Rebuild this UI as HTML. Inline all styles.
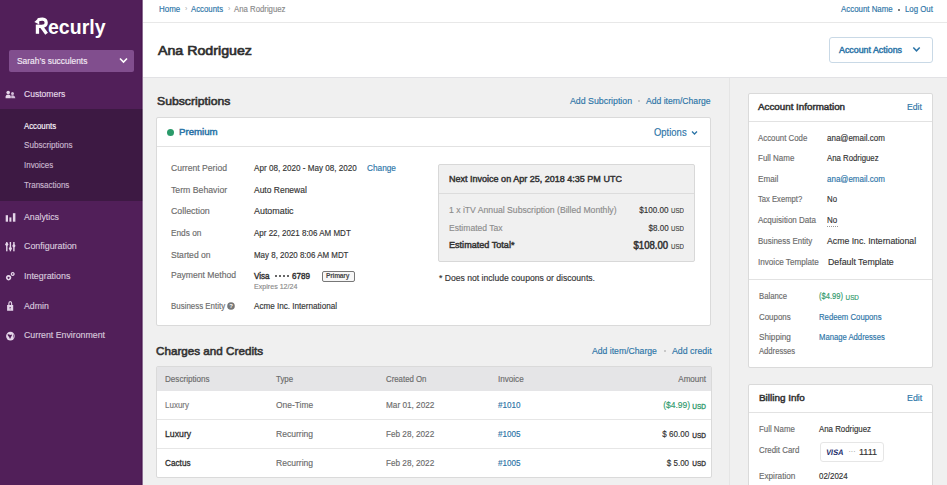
<!DOCTYPE html>
<html><head><meta charset="utf-8">
<style>
*{margin:0;padding:0;box-sizing:border-box}
html,body{width:947px;height:485px;overflow:hidden;background:#f0f0f0;font-family:"Liberation Sans",sans-serif;color:#333}
.a{position:absolute}
.t{position:absolute;white-space:nowrap;line-height:20px;height:20px}
.card{position:absolute;background:#fff;border:1px solid #dadada;border-radius:2px}
</style></head><body>
<!-- sidebar -->
<div class="a" style="left:0;top:0;width:143px;height:485px;background:#511f59"></div>
<div class="a" style="left:0;top:109px;width:143px;height:92px;background:#3d1943"></div>
<div class="a" style="left:141px;top:0;width:1px;height:485px;background:#4a1851"></div><div class="a" style="left:142px;top:0;width:1px;height:485px;background:#8b6c91"></div><div class="a" style="left:141px;top:109px;width:1px;height:92px;background:#34113b"></div><div class="a" style="left:142px;top:109px;width:1px;height:92px;background:#7a6480"></div>
<svg class="a" style="left:0;top:0" width="120" height="45" viewBox="0 0 120 45">
 <g fill="#fff">
  <rect x="35.8" y="24.6" width="3.3" height="9.2"/>
  <path d="M34.4 22.1 L39 17.7 L39.3 24.5Z"/>
 </g>
 <path d="M37.9 19.9 Q40.5 19 42.6 19.1 Q46.2 19.4 46.2 22.8 Q46.2 26.3 41.8 26.4 L37.5 26.4" stroke="#fff" stroke-width="3.2" fill="none"/>
 <path d="M40.8 25.8 L46.6 33.8" stroke="#fff" stroke-width="3.3" fill="none"/>
 <text x="48" y="33.7" font-family="Liberation Sans" font-weight="bold" font-size="21" fill="#fff" textLength="57.5" lengthAdjust="spacingAndGlyphs">ecurly</text>
</svg>
<div class="a" style="left:9px;top:50px;width:125px;height:22px;background:#814e8e;border-radius:2px"></div>
<svg class="a" style="left:119px;top:57px" width="9" height="7" viewBox="0 0 9 7"><path d="M1 1.5 L4.5 5 L8 1.5" stroke="#fff" stroke-width="1.6" fill="none"/></svg>
<svg class="a" style="left:0;top:80px" width="20" height="270" viewBox="0 80 20 270">
<g fill="#e4d5e9">
 <circle cx="8.2" cy="92.5" r="1.8"/><path d="M5.6 98.2 L5.6 96.6 Q5.8 94.6 8.2 94.6 Q10.6 94.6 10.8 96.6 L10.8 98.2Z"/>
 <circle cx="12.5" cy="93.4" r="1.5" fill="#d2bdd8"/><path d="M11.2 98.2 L11.2 95.6 Q12.5 95.2 13.6 95.4 Q15.2 96 15.3 98.2Z" fill="#d2bdd8"/>
 <rect x="5.7" y="215.2" width="2.3" height="6.5"/><rect x="9.4" y="217.4" width="2" height="4.3"/><rect x="12.9" y="213.2" width="2.5" height="8.5"/>
 <rect x="6.1" y="242" width="1.4" height="9.3"/><rect x="9.7" y="242" width="1.4" height="9.3"/><rect x="13.2" y="242" width="1.4" height="9.3"/>
 <circle cx="6.8" cy="244.3" r="1.5"/><circle cx="10.4" cy="248.4" r="1.5"/><circle cx="13.9" cy="245.8" r="1.5"/>
 <path fill-rule="evenodd" d="M8.6 275 a2.7 2.7 0 1 0 0.01 0Z M8.6 276.7 a1 1 0 1 1 -0.01 0Z"/>
 <path fill-rule="evenodd" d="M12.7 271.9 a2 2 0 1 0 0.01 0Z M12.7 273.2 a0.7 0.7 0 1 1 -0.01 0Z"/>
 <path d="M8.3 305.2 L8.3 303.6 Q8.3 301 10.2 301 Q12.2 301 12.2 303.6 L12.2 305.2 L11.1 305.2 L11.1 303.6 Q11.1 302.2 10.2 302.2 Q9.4 302.2 9.4 303.6 L9.4 305.2Z"/>
 <path fill-rule="evenodd" d="M7.1 305.1 H13.2 V310.8 H7.1Z M10.2 307.2 a0.8 0.8 0 1 0 0.01 0Z M9.8 308 h0.8 v1.3 h-0.8Z"/>
 <circle cx="10.4" cy="336.1" r="4.3"/>
 <path d="M7.5 334.5 Q9 334 10.1 334.9 L11.8 334.5 Q12.3 335.9 11.1 336.7 Q10.7 338.1 10 338.9 Q9.3 337.7 9 336.7 Q7.9 336.4 7.5 334.5Z M13.1 333.4 Q14.7 335.6 13.7 338.4 Q13.5 336 13.1 333.4Z" fill="#511f59"/>
</g></svg>

<!-- header -->
<div class="a" style="left:143px;top:0;width:804px;height:78px;background:#fff;border-bottom:1px solid #e2e2e5"></div>
<div class="a" style="left:143px;top:22px;width:804px;height:1px;background:#e8e8e8"></div>
<div class="t" style="left:185px;top:-1px;font-size:7px;color:#aaa">›</div>
<div class="t" style="left:228px;top:-1px;font-size:7px;color:#aaa">›</div>
<div class="a" style="left:898px;top:8.5px;width:2px;height:2px;border-radius:1px;background:#555"></div>
<div class="a" style="left:829px;top:37px;width:104px;height:26px;border:1px solid #c9d9e6;border-radius:3px;background:#fff"></div>
<svg class="a" style="left:912px;top:46px" width="9" height="7" viewBox="0 0 9 7"><path d="M1.3 1.5 L4.5 4.8 L7.7 1.5" stroke="#2b74a7" stroke-width="1.5" fill="none"/></svg>

<!-- vertical divider -->
<div class="a" style="left:729px;top:78px;width:1px;height:407px;background:#e5e5e5"></div>

<!-- subscriptions -->
<div class="a" style="left:638px;top:100px;width:2px;height:2px;border-radius:1px;background:#bbb"></div>
<div class="card" style="left:156px;top:117px;width:555px;height:209px"></div>
<div class="a" style="left:157px;top:146px;width:553px;height:1px;background:#e2e2e2"></div>
<div class="a" style="left:167px;top:128.5px;width:7px;height:7px;border-radius:50%;background:#2a9a6a"></div>
<svg class="a" style="left:691px;top:129.5px" width="7" height="6" viewBox="0 0 7 6"><path d="M1 1.5 L3.5 4 L6 1.5" stroke="#2b74a7" stroke-width="1.3" fill="none"/></svg>
<div class="a" style="left:321.5px;top:270.5px;width:33px;height:11px;border:1px solid #777;border-radius:2px;background:#f7f7f7"></div>
<div class="t" style="left:326px;top:266px;font-size:6.7px;font-weight:bold;color:#444;letter-spacing:-0.25px">Primary</div>
<svg class="a" style="left:227px;top:302px" width="8" height="8" viewBox="0 0 8 8"><circle cx="4" cy="4" r="3.8" fill="#777"/><text x="4" y="6.3" font-family="Liberation Sans" font-weight="bold" font-size="6" fill="#fff" text-anchor="middle">?</text></svg>
<div class="a" style="left:438px;top:164px;width:257px;height:98px;background:#f0f0f0;border:1px solid #d8d8d8;border-radius:2px"></div>
<div class="a" style="left:439px;top:193px;width:255px;height:1px;background:#dcdcdc"></div>

<!-- charges -->
<div class="a" style="left:664px;top:350px;width:2px;height:2px;border-radius:1px;background:#bbb"></div>
<div class="card" style="left:156px;top:366px;width:556px;height:112px;overflow:hidden"></div>
<div class="a" style="left:157px;top:367px;width:554px;height:24px;background:#e5e5e7"></div>
<div class="a" style="left:157px;top:419px;width:554px;height:1px;background:#e6e6e6"></div>
<div class="a" style="left:157px;top:448px;width:554px;height:1px;background:#e6e6e6"></div>

<!-- right column -->
<div class="card" style="left:748px;top:93px;width:185px;height:275px"></div>
<div class="a" style="left:749px;top:121px;width:183px;height:1px;background:#e2e2e2"></div>
<div class="a" style="left:749px;top:279px;width:183px;height:1px;background:#e2e2e2"></div>
<div class="a" style="left:827px;top:225.5px;width:10.5px;height:0;border-top:1px dotted #999"></div>
<div class="card" style="left:748px;top:384px;width:185px;height:120px"></div>
<div class="a" style="left:749px;top:412px;width:183px;height:1px;background:#e2e2e2"></div>
<div class="a" style="left:819.5px;top:442px;width:64px;height:19.5px;border:1px solid #e6e6e6;border-radius:3px;background:#fff"></div>
<svg class="a" style="left:822px;top:445px" width="24" height="12" viewBox="0 0 24 12"><text x="3.6" y="10" font-family="Liberation Sans" font-weight="bold" font-size="7.9" fill="#1c2d6b" textLength="17.4" lengthAdjust="spacingAndGlyphs" transform="skewX(-10) translate(1.8,0)">VISA</text></svg>
<div class="t" style="left:848.5px;top:441.5px;font-size:7px;color:#888">···</div>


<div class="a" style="left:274.5px;top:274.5px;width:2px;height:2px;border-radius:1px;background:#333"></div><div class="a" style="left:278.5px;top:274.5px;width:2px;height:2px;border-radius:1px;background:#333"></div><div class="a" style="left:282.5px;top:274.5px;width:2px;height:2px;border-radius:1px;background:#333"></div><div class="a" style="left:286.5px;top:274.5px;width:2px;height:2px;border-radius:1px;background:#333"></div>
<div class="t" style="top:51px;font-size:9.09px;color:#f3e9f5;transform:scaleX(0.9259);transform-origin:left center;-webkit-text-stroke:0.15px #f3e9f5;left:16.60px;">Sarah’s succulents</div>
<div class="t" style="top:84px;font-size:9.23px;color:#e6dcea;transform:scaleX(0.9259);transform-origin:left center;-webkit-text-stroke:0.15px #e6dcea;left:23.80px;">Customers</div>
<div class="t" style="top:116px;font-size:8.45px;color:#fbf6fc;transform:scaleX(0.9259);transform-origin:left center;-webkit-text-stroke:0.15px #fbf6fc;left:23.90px;">Accounts</div>
<div class="t" style="top:135px;font-size:8.76px;color:#cab7cf;transform:scaleX(0.9259);transform-origin:left center;-webkit-text-stroke:0.15px #cab7cf;left:23.90px;">Subscriptions</div>
<div class="t" style="top:155px;font-size:8.60px;color:#cab7cf;transform:scaleX(0.9259);transform-origin:left center;-webkit-text-stroke:0.15px #cab7cf;left:23.90px;">Invoices</div>
<div class="t" style="top:175px;font-size:8.62px;color:#cab7cf;transform:scaleX(0.9259);transform-origin:left center;-webkit-text-stroke:0.15px #cab7cf;left:23.90px;">Transactions</div>
<div class="t" style="top:207px;font-size:9.42px;color:#d8cadd;transform:scaleX(0.9259);transform-origin:left center;-webkit-text-stroke:0.15px #d8cadd;left:23.70px;">Analytics</div>
<div class="t" style="top:236px;font-size:9.59px;color:#d8cadd;transform:scaleX(0.9259);transform-origin:left center;-webkit-text-stroke:0.15px #d8cadd;left:23.70px;">Configuration</div>
<div class="t" style="top:266px;font-size:9.59px;color:#d8cadd;transform:scaleX(0.9259);transform-origin:left center;-webkit-text-stroke:0.15px #d8cadd;left:23.70px;">Integrations</div>
<div class="t" style="top:296px;font-size:9.45px;color:#d8cadd;transform:scaleX(0.9259);transform-origin:left center;-webkit-text-stroke:0.15px #d8cadd;left:23.70px;">Admin</div>
<div class="t" style="top:325px;font-size:9.49px;color:#d8cadd;transform:scaleX(0.9259);transform-origin:left center;-webkit-text-stroke:0.15px #d8cadd;left:23.70px;">Current Environment</div>
<div class="t" style="top:-1px;font-size:8.58px;color:#2b74a7;transform:scaleX(0.9259);transform-origin:left center;-webkit-text-stroke:0.15px #2b74a7;left:158.80px;">Home</div>
<div class="t" style="top:-1px;font-size:8.43px;color:#2b74a7;transform:scaleX(0.9259);transform-origin:left center;-webkit-text-stroke:0.15px #2b74a7;left:191.20px;">Accounts</div>
<div class="t" style="top:-1px;font-size:8.42px;color:#8a8a8a;transform:scaleX(0.9259);transform-origin:left center;-webkit-text-stroke:0.15px #8a8a8a;left:234.40px;">Ana Rodriguez</div>
<div class="t" style="top:-1px;font-size:8.53px;color:#2b74a7;transform:scaleX(0.9259);transform-origin:left center;-webkit-text-stroke:0.15px #2b74a7;left:841.10px;">Account Name</div>
<div class="t" style="top:-1px;font-size:8.47px;color:#2b74a7;transform:scaleX(0.9259);transform-origin:left center;-webkit-text-stroke:0.15px #2b74a7;left:904.60px;">Log Out</div>
<div class="t" style="top:41px;font-size:13.65px;color:#2e2e2e;transform:scaleX(1.0411);transform-origin:left center;-webkit-text-stroke:0.68px #2e2e2e;left:158.40px;">Ana Rodriguez</div>
<div class="t" style="top:40px;font-size:8.50px;color:#2b74a7;transform:scaleX(1.0417);transform-origin:left center;-webkit-text-stroke:0.42px #2b74a7;left:839.00px;">Account Actions</div>
<div class="t" style="top:91px;font-size:11.76px;color:#333;transform:scaleX(1.0400);transform-origin:left center;-webkit-text-stroke:0.59px #333;left:157.00px;">Subscriptions</div>
<div class="t" style="top:91px;font-size:9.51px;color:#2b74a7;transform:scaleX(0.9259);transform-origin:left center;-webkit-text-stroke:0.15px #2b74a7;left:569.60px;">Add Subcription</div>
<div class="t" style="top:91px;font-size:9.31px;color:#2b74a7;transform:scaleX(0.9259);transform-origin:left center;-webkit-text-stroke:0.15px #2b74a7;left:646.20px;">Add item/Charge</div>
<div class="t" style="top:122px;font-size:9.38px;color:#2b74a7;transform:scaleX(1.0309);transform-origin:left center;-webkit-text-stroke:0.47px #2b74a7;left:179.30px;">Premium</div>
<div class="t" style="top:123px;font-size:10.22px;color:#2b74a7;transform:scaleX(0.9259);transform-origin:left center;-webkit-text-stroke:0.15px #2b74a7;left:654.10px;">Options</div>
<div class="t" style="top:158px;font-size:9.30px;color:#6b6b6b;transform:scaleX(0.9259);transform-origin:left center;-webkit-text-stroke:0.15px #6b6b6b;left:170.50px;">Current Period</div>
<div class="t" style="top:158px;font-size:8.77px;color:#333;transform:scaleX(0.9259);transform-origin:left center;-webkit-text-stroke:0.15px #333;left:253.70px;">Apr 08, 2020 - May 08, 2020</div>
<div class="t" style="top:180px;font-size:9.41px;color:#6b6b6b;transform:scaleX(0.9259);transform-origin:left center;-webkit-text-stroke:0.15px #6b6b6b;left:170.50px;">Term Behavior</div>
<div class="t" style="top:180px;font-size:9.16px;color:#333;transform:scaleX(0.9259);transform-origin:left center;-webkit-text-stroke:0.15px #333;left:253.70px;">Auto Renewal</div>
<div class="t" style="top:201px;font-size:9.54px;color:#6b6b6b;transform:scaleX(0.9259);transform-origin:left center;-webkit-text-stroke:0.15px #6b6b6b;left:170.50px;">Collection</div>
<div class="t" style="top:201px;font-size:9.62px;color:#333;transform:scaleX(0.9259);transform-origin:left center;-webkit-text-stroke:0.15px #333;left:253.70px;">Automatic</div>
<div class="t" style="top:223px;font-size:8.95px;color:#6b6b6b;transform:scaleX(0.9259);transform-origin:left center;-webkit-text-stroke:0.15px #6b6b6b;left:170.50px;">Ends on</div>
<div class="t" style="top:223px;font-size:8.65px;color:#333;transform:scaleX(0.9259);transform-origin:left center;-webkit-text-stroke:0.15px #333;left:253.70px;">Apr 22, 2021 8:06 AM MDT</div>
<div class="t" style="top:245px;font-size:9.27px;color:#6b6b6b;transform:scaleX(0.9259);transform-origin:left center;-webkit-text-stroke:0.15px #6b6b6b;left:170.50px;">Started on</div>
<div class="t" style="top:245px;font-size:8.58px;color:#333;transform:scaleX(0.9259);transform-origin:left center;-webkit-text-stroke:0.15px #333;left:253.70px;">May 8, 2020 8:06 AM MDT</div>
<div class="t" style="top:265px;font-size:9.31px;color:#6b6b6b;transform:scaleX(0.9259);transform-origin:left center;-webkit-text-stroke:0.15px #6b6b6b;left:170.50px;">Payment Method</div>
<div class="t" style="top:296px;font-size:8.55px;color:#6b6b6b;transform:scaleX(0.9259);transform-origin:left center;-webkit-text-stroke:0.15px #6b6b6b;left:170.50px;">Business Entity</div>
<div class="t" style="top:296px;font-size:8.78px;color:#333;transform:scaleX(0.9259);transform-origin:left center;-webkit-text-stroke:0.15px #333;left:253.70px;">Acme Inc. International</div>
<div class="t" style="top:158px;font-size:8.94px;color:#2b74a7;transform:scaleX(0.9259);transform-origin:left center;-webkit-text-stroke:0.15px #2b74a7;left:367.20px;">Change</div>
<div class="t" style="top:266px;font-size:8.52px;color:#333;transform:scaleX(0.9434);transform-origin:left center;-webkit-text-stroke:0.43px #333;left:253.70px;">Visa</div>
<div class="t" style="top:266px;font-size:8.58px;color:#333;transform:scaleX(0.9434);transform-origin:left center;-webkit-text-stroke:0.43px #333;left:292.00px;">6789</div>
<div class="t" style="top:277px;font-size:7.68px;color:#8a8a8a;transform:scaleX(0.9259);transform-origin:left center;-webkit-text-stroke:0.15px #8a8a8a;left:253.70px;">Expires 12/24</div>
<div class="t" style="top:169px;font-size:8.66px;color:#333;transform:scaleX(1.0417);transform-origin:left center;-webkit-text-stroke:0.43px #333;left:449.30px;">Next Invoice on Apr 25, 2018 4:35 PM UTC</div>
<div class="t" style="top:200px;font-size:9.33px;color:#8c8c8c;transform:scaleX(0.9259);transform-origin:left center;-webkit-text-stroke:0.15px #8c8c8c;left:449.30px;">1 x iTV Annual Subscription (Billed Monthly)</div>
<div class="t" style="top:218px;font-size:9.24px;color:#8c8c8c;transform:scaleX(0.9259);transform-origin:left center;-webkit-text-stroke:0.15px #8c8c8c;left:449.30px;">Estimated Tax</div>
<div class="t" style="top:235px;font-size:9.27px;color:#333;transform:scaleX(0.9804);transform-origin:left center;-webkit-text-stroke:0.46px #333;left:449.30px;">Estimated Total*</div>
<div class="t" style="top:200px;font-size:8.75px;color:#333;transform:scaleX(0.9259);transform-origin:right center;-webkit-text-stroke:0.15px #333;right:278.30px;">$100.00</div>
<div class="t" style="top:218px;font-size:8.63px;color:#333;transform:scaleX(0.9259);transform-origin:right center;-webkit-text-stroke:0.15px #333;right:278.30px;">$8.00</div>
<div class="t" style="top:236px;font-size:10.27px;color:#333;transform:scaleX(0.9320);transform-origin:right center;-webkit-text-stroke:0.51px #333;right:278.70px;">$108.00</div>
<div class="t" style="top:201px;font-size:7.08px;color:#444;transform:scaleX(0.8696);transform-origin:right center;-webkit-text-stroke:0.15px #444;right:263.10px;">USD</div>
<div class="t" style="top:219px;font-size:7.08px;color:#444;transform:scaleX(0.8696);transform-origin:right center;-webkit-text-stroke:0.15px #444;right:263.10px;">USD</div>
<div class="t" style="top:237px;font-size:7.08px;color:#444;transform:scaleX(0.8696);transform-origin:right center;-webkit-text-stroke:0.15px #444;right:263.10px;">USD</div>
<div class="t" style="top:268px;font-size:9.31px;color:#333;transform:scaleX(0.9259);transform-origin:left center;-webkit-text-stroke:0.15px #333;left:439.00px;">* Does not include coupons or discounts.</div>
<div class="t" style="top:341px;font-size:11.49px;color:#333;transform:scaleX(1.0166);transform-origin:left center;-webkit-text-stroke:0.57px #333;left:156.40px;">Charges and Credits</div>
<div class="t" style="top:341px;font-size:9.36px;color:#2b74a7;transform:scaleX(0.9259);transform-origin:left center;-webkit-text-stroke:0.15px #2b74a7;left:592.30px;">Add item/Charge</div>
<div class="t" style="top:341px;font-size:9.50px;color:#2b74a7;transform:scaleX(0.9259);transform-origin:left center;-webkit-text-stroke:0.15px #2b74a7;left:671.80px;">Add credit</div>
<div class="t" style="top:369px;font-size:8.75px;color:#6b6b6b;transform:scaleX(0.9259);transform-origin:left center;-webkit-text-stroke:0.15px #6b6b6b;left:164.60px;">Descriptions</div>
<div class="t" style="top:369px;font-size:8.52px;color:#6b6b6b;transform:scaleX(0.9259);transform-origin:left center;-webkit-text-stroke:0.15px #6b6b6b;left:275.70px;">Type</div>
<div class="t" style="top:369px;font-size:8.46px;color:#6b6b6b;transform:scaleX(0.9259);transform-origin:left center;-webkit-text-stroke:0.15px #6b6b6b;left:386.30px;">Created On</div>
<div class="t" style="top:369px;font-size:8.76px;color:#6b6b6b;transform:scaleX(0.9259);transform-origin:left center;-webkit-text-stroke:0.15px #6b6b6b;left:497.60px;">Invoice</div>
<div class="t" style="top:369px;font-size:8.74px;color:#6b6b6b;transform:scaleX(0.9259);transform-origin:right center;-webkit-text-stroke:0.15px #6b6b6b;right:241.10px;">Amount</div>
<div class="t" style="top:395px;font-size:8.64px;color:#777;transform:scaleX(0.9259);transform-origin:left center;-webkit-text-stroke:0.15px #777;left:164.60px;">Luxury</div>
<div class="t" style="top:395px;font-size:9.09px;color:#6b6b6b;transform:scaleX(0.9259);transform-origin:left center;-webkit-text-stroke:0.15px #6b6b6b;left:275.70px;">One-Time</div>
<div class="t" style="top:395px;font-size:8.87px;color:#6b6b6b;transform:scaleX(0.9259);transform-origin:left center;-webkit-text-stroke:0.15px #6b6b6b;left:386.30px;">Mar 01, 2022</div>
<div class="t" style="top:395px;font-size:8.78px;color:#2b74a7;transform:scaleX(0.9259);transform-origin:left center;-webkit-text-stroke:0.15px #2b74a7;left:497.60px;">#1010</div>
<div class="t" style="top:395px;font-size:9.17px;color:#2f9a6c;transform:scaleX(0.9259);transform-origin:right center;-webkit-text-stroke:0.15px #2f9a6c;right:256.60px;">($4.99)</div>
<div class="t" style="top:397px;font-size:6.44px;color:#2f9a6c;transform:scaleX(1.0000);transform-origin:right center;-webkit-text-stroke:0.32px #2f9a6c;right:241.10px;">USD</div>
<div class="t" style="top:424px;font-size:9.78px;color:#2e2e2e;transform:scaleX(0.8929);transform-origin:left center;-webkit-text-stroke:0.3px #2e2e2e;left:164.60px;">Luxury</div>
<div class="t" style="top:424px;font-size:9.24px;color:#6b6b6b;transform:scaleX(0.9259);transform-origin:left center;-webkit-text-stroke:0.15px #6b6b6b;left:275.70px;">Recurring</div>
<div class="t" style="top:424px;font-size:8.83px;color:#6b6b6b;transform:scaleX(0.9259);transform-origin:left center;-webkit-text-stroke:0.15px #6b6b6b;left:386.30px;">Feb 28, 2022</div>
<div class="t" style="top:424px;font-size:8.78px;color:#2b74a7;transform:scaleX(0.9259);transform-origin:left center;-webkit-text-stroke:0.15px #2b74a7;left:497.60px;">#1005</div>
<div class="t" style="top:424px;font-size:8.74px;color:#333;transform:scaleX(0.9259);transform-origin:right center;-webkit-text-stroke:0.15px #333;right:257.50px;">$ 60.00</div>
<div class="t" style="top:426px;font-size:6.44px;color:#333;transform:scaleX(1.0000);transform-origin:right center;-webkit-text-stroke:0.32px #333;right:241.10px;">USD</div>
<div class="t" style="top:453px;font-size:9.21px;color:#2e2e2e;transform:scaleX(0.8929);transform-origin:left center;-webkit-text-stroke:0.3px #2e2e2e;left:164.60px;">Cactus</div>
<div class="t" style="top:453px;font-size:9.24px;color:#6b6b6b;transform:scaleX(0.9259);transform-origin:left center;-webkit-text-stroke:0.15px #6b6b6b;left:275.70px;">Recurring</div>
<div class="t" style="top:453px;font-size:8.83px;color:#6b6b6b;transform:scaleX(0.9259);transform-origin:left center;-webkit-text-stroke:0.15px #6b6b6b;left:386.30px;">Feb 28, 2022</div>
<div class="t" style="top:453px;font-size:8.78px;color:#2b74a7;transform:scaleX(0.9259);transform-origin:left center;-webkit-text-stroke:0.15px #2b74a7;left:497.60px;">#1005</div>
<div class="t" style="top:453px;font-size:8.66px;color:#333;transform:scaleX(0.9259);transform-origin:right center;-webkit-text-stroke:0.15px #333;right:257.50px;">$ 5.00</div>
<div class="t" style="top:454px;font-size:6.44px;color:#333;transform:scaleX(1.0000);transform-origin:right center;-webkit-text-stroke:0.32px #333;right:241.10px;">USD</div>
<div class="t" style="top:97px;font-size:9.31px;color:#333;transform:scaleX(1.0526);transform-origin:left center;-webkit-text-stroke:0.47px #333;left:758.20px;">Account Information</div>
<div class="t" style="top:97px;font-size:9.40px;color:#2b74a7;transform:scaleX(0.9259);transform-origin:left center;-webkit-text-stroke:0.15px #2b74a7;left:906.80px;">Edit</div>
<div class="t" style="top:128px;font-size:8.49px;color:#6b6b6b;transform:scaleX(0.9259);transform-origin:left center;-webkit-text-stroke:0.15px #6b6b6b;left:758.40px;">Account Code</div>
<div class="t" style="top:128px;font-size:8.64px;color:#333;transform:scaleX(0.9259);transform-origin:left center;-webkit-text-stroke:0.15px #333;left:827.30px;">ana@email.com</div>
<div class="t" style="top:148px;font-size:8.63px;color:#6b6b6b;transform:scaleX(0.9259);transform-origin:left center;-webkit-text-stroke:0.15px #6b6b6b;left:758.40px;">Full Name</div>
<div class="t" style="top:148px;font-size:8.44px;color:#333;transform:scaleX(0.9259);transform-origin:left center;-webkit-text-stroke:0.15px #333;left:827.30px;">Ana Rodriguez</div>
<div class="t" style="top:169px;font-size:8.81px;color:#6b6b6b;transform:scaleX(0.9259);transform-origin:left center;-webkit-text-stroke:0.15px #6b6b6b;left:758.40px;">Email</div>
<div class="t" style="top:169px;font-size:8.64px;color:#2b74a7;transform:scaleX(0.9259);transform-origin:left center;-webkit-text-stroke:0.15px #2b74a7;left:827.30px;">ana@email.com</div>
<div class="t" style="top:190px;font-size:8.26px;color:#6b6b6b;transform:scaleX(0.9259);transform-origin:left center;-webkit-text-stroke:0.15px #6b6b6b;left:758.40px;">Tax Exempt?</div>
<div class="t" style="top:189px;font-size:8.45px;color:#333;transform:scaleX(0.9259);transform-origin:left center;-webkit-text-stroke:0.15px #333;left:827.30px;">No</div>
<div class="t" style="top:210px;font-size:8.68px;color:#6b6b6b;transform:scaleX(0.9259);transform-origin:left center;-webkit-text-stroke:0.15px #6b6b6b;left:758.40px;">Acquisition Data</div>
<div class="t" style="top:210px;font-size:8.62px;color:#333;transform:scaleX(0.9259);transform-origin:left center;-webkit-text-stroke:0.15px #333;left:827.30px;">No</div>
<div class="t" style="top:231px;font-size:8.59px;color:#6b6b6b;transform:scaleX(0.9259);transform-origin:left center;-webkit-text-stroke:0.15px #6b6b6b;left:758.40px;">Business Entity</div>
<div class="t" style="top:231px;font-size:9.41px;color:#333;transform:scaleX(0.9259);transform-origin:left center;-webkit-text-stroke:0.15px #333;left:827.30px;">Acme Inc. International</div>
<div class="t" style="top:252px;font-size:8.79px;color:#6b6b6b;transform:scaleX(0.9259);transform-origin:left center;-webkit-text-stroke:0.15px #6b6b6b;left:758.40px;">Invoice Template</div>
<div class="t" style="top:252px;font-size:9.49px;color:#333;transform:scaleX(0.9259);transform-origin:left center;-webkit-text-stroke:0.15px #333;left:828.00px;">Default Template</div>
<div class="t" style="top:286px;font-size:8.40px;color:#6b6b6b;transform:scaleX(0.9259);transform-origin:left center;-webkit-text-stroke:0.15px #6b6b6b;left:758.60px;">Balance</div>
<div class="t" style="top:287px;font-size:8.21px;color:#2f9a6c;transform:scaleX(0.9259);transform-origin:left center;-webkit-text-stroke:0.15px #2f9a6c;left:819.40px;">($4.99)</div>
<div class="t" style="top:288px;font-size:6.30px;color:#2f9a6c;transform:scaleX(1.0000);transform-origin:left center;-webkit-text-stroke:0.15px #2f9a6c;left:845.60px;">USD</div>
<div class="t" style="top:307px;font-size:8.55px;color:#6b6b6b;transform:scaleX(0.9259);transform-origin:left center;-webkit-text-stroke:0.15px #6b6b6b;left:758.60px;">Coupons</div>
<div class="t" style="top:307px;font-size:8.40px;color:#2b74a7;transform:scaleX(0.9259);transform-origin:left center;-webkit-text-stroke:0.15px #2b74a7;left:819.40px;">Redeem Coupons</div>
<div class="t" style="top:327px;font-size:8.85px;color:#6b6b6b;transform:scaleX(0.9259);transform-origin:left center;-webkit-text-stroke:0.15px #6b6b6b;left:758.60px;">Shipping</div>
<div class="t" style="top:342px;font-size:8.25px;color:#6b6b6b;transform:scaleX(0.9259);transform-origin:left center;-webkit-text-stroke:0.15px #6b6b6b;left:758.60px;">Addresses</div>
<div class="t" style="top:327px;font-size:8.31px;color:#2b74a7;transform:scaleX(0.9259);transform-origin:left center;-webkit-text-stroke:0.15px #2b74a7;left:819.40px;">Manage Addresses</div>
<div class="t" style="top:388px;font-size:9.41px;color:#333;transform:scaleX(1.0526);transform-origin:left center;-webkit-text-stroke:0.47px #333;left:758.60px;">Billing Info</div>
<div class="t" style="top:388px;font-size:9.53px;color:#2b74a7;transform:scaleX(0.9259);transform-origin:left center;-webkit-text-stroke:0.15px #2b74a7;left:906.50px;">Edit</div>
<div class="t" style="top:419px;font-size:8.51px;color:#6b6b6b;transform:scaleX(0.9259);transform-origin:left center;-webkit-text-stroke:0.15px #6b6b6b;left:758.50px;">Full Name</div>
<div class="t" style="top:419px;font-size:8.49px;color:#333;transform:scaleX(0.9259);transform-origin:left center;-webkit-text-stroke:0.15px #333;left:819.10px;">Ana Rodriguez</div>
<div class="t" style="top:440px;font-size:8.53px;color:#6b6b6b;transform:scaleX(0.9259);transform-origin:left center;-webkit-text-stroke:0.15px #6b6b6b;left:758.50px;">Credit Card</div>
<div class="t" style="top:442px;font-size:9.76px;color:#333;transform:scaleX(0.9259);transform-origin:left center;-webkit-text-stroke:0.15px #333;left:859.20px;">1111</div>
<div class="t" style="top:466px;font-size:8.84px;color:#6b6b6b;transform:scaleX(0.9259);transform-origin:left center;-webkit-text-stroke:0.15px #6b6b6b;left:758.50px;">Expiration</div>
<div class="t" style="top:466px;font-size:8.57px;color:#333;transform:scaleX(0.9259);transform-origin:left center;-webkit-text-stroke:0.15px #333;left:819.10px;">02/2024</div>
</body></html>
